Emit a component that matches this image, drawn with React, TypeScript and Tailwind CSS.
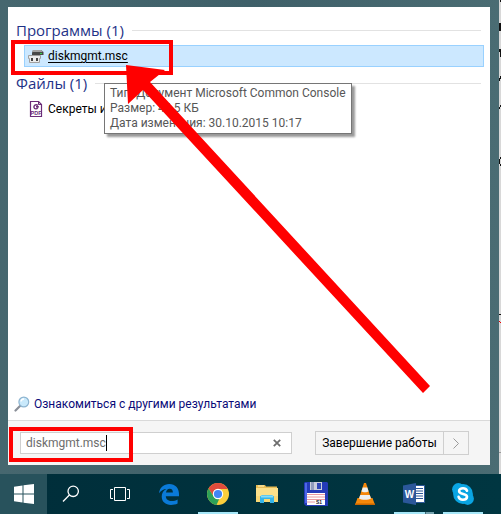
import React from 'react';

function DiskIcon() {
  return (
    <svg viewBox="0 0 16 16" className="w-4 h-4 shrink-0">
      <path d="M5 2h8l2.500 2v3H4V5z" fill="#484848" />
      <path d="M5 2h8l2 2H4z" fill="#a2a2a2" />
      <path d="M12 5h2v1h-2z" fill="#35d04a" />
      <path d="M.5 7.500h12v3h-1v4h-10v-4h-1z" fill="#ececec" stroke="#a0a0a0" />
      <path d="M3 10h2v3H3zM8 10h2v3H8z" fill="#444" />
    </svg>
  );
}

function PdfIcon() {
  return (
    <svg viewBox="0 0 16 16" className="w-4 h-4 shrink-0">
      <path d="M2.5.5h8l3 3v12h-11z" fill="#fff" stroke="#6b2c78" strokeWidth="1.200" />
      <path d="M10.5.5v3h3" fill="none" stroke="#6b2c78" />
      <path d="M10 4.300c-2.500-1.500-4.500.3-4 2.300.5 1.800 3 1.600 3.700.1l.3-1H8" fill="none" stroke="#6b2c78" strokeWidth="1.400" />
      <text x="8" y="14.300" textAnchor="middle" fontSize="5.500" fontWeight="700" fontFamily="Liberation Sans, sans-serif" fill="#6b2c78">PDF</text>
    </svg>
  );
}

function LensIcon() {
  return (
    <svg viewBox="0 0 16 16" className="w-4 h-4 shrink-0">
      <path d="M1.5 14.5 6 10" stroke="#8a8f98" strokeWidth="2.2" strokeLinecap="round" />
      <circle cx="9.8" cy="6" r="4.9" fill="#c9e9fb" stroke="#8db4d0" strokeWidth="1.2" />
      <path d="M7 5.5A3 3 0 0 1 10 3" stroke="#fff" strokeWidth="1.4" fill="none" />
    </svg>
  );
}

const startIcon = (
  <svg viewBox="0 0 20 20" className="w-5 h-5" fill="#fff">
    <path d="M0 2.8 8.5 1.5v8H0zM9.5 1.3 20 0v9.5H9.5zM0 10.5h8.5v8L0 17.3zM9.5 10.5H20V20L9.5 18.7z" />
  </svg>
);

const searchIcon = (
  <svg viewBox="0 0 18 18" className="w-[18px] h-[18px]" fill="none" stroke="#fff" strokeWidth="1.3">
    <circle cx="11.2" cy="6.3" r="5.2" />
    <path d="M7.4 10 1 16.5" />
  </svg>
);

const taskViewIcon = (
  <svg viewBox="0 0 20 16" className="w-5 h-4" fill="none" stroke="#fff">
    <path d="M4.5 1.5h11v13h-11zM3 3.5H.5v9H3M17 3.5h2.5v9H17" />
  </svg>
);

const edgeIcon = (
  <svg viewBox="0 0 20 21" className="w-5 h-[21px]">
    <path
      d="M0 9.2C.8 3.5 4.8 0 10.3 0 16.400 0 20 4.300 20 10v2.300H6.800c.1 3.200 2.600 4.700 5.800 4.700 2.300 0 4.300-.6 6-1.600v4.200c-2 1-4.200 1.400-6.600 1.400-5.600 0-9.300-3.300-9.300-8.400 0-3.300 1.700-6.100 4.800-7.500C4.500 5.200 1.900 6.700 0 9.200zM7 8.500h6.900c0-2.300-1-3.700-3.200-3.700C8.600 4.800 7.400 6.200 7 8.500z"
      fill="#0a7ad8"
    />
  </svg>
);

const chromeIcon = (
  <svg viewBox="0 0 22 22" className="w-[22px] h-[22px]">
    <circle cx="11" cy="11" r="11" fill="#fbce3c" />
    <path d="M1.500 5.500A11 11 0 0 1 20.500 5.500L20.800 6H11a5 5 0 0 0-4.500 7z" fill="#df4b3c" />
    <path d="M1.500 5.500 6.700 13.500A5 5 0 0 0 12.200 15.900L9.500 21.900A11 11 0 0 1 1.500 5.500z" fill="#2da158" />
    <circle cx="11" cy="11" r="5.200" fill="#fff" />
    <circle cx="11" cy="11" r="4.100" fill="#4285f4" />
  </svg>
);

const folderIcon = (
  <svg viewBox="0 0 22 20" className="w-[22px] h-5">
    <path d="M0 1h9l1 1.500h11V5H0z" fill="#e8bd55" />
    <path d="M2 1.500h6v1H2z" fill="#fff4c4" />
    <path d="M0 4h22v14H0z" fill="#fbe08a" />
    <path d="M0 12h22v6H0z" fill="#f8d775" />
    <path d="M4 19v-6.500L6 11h10l2 1.500V19h-4v-4H8v4z" fill="#35b5ea" />
    <path d="M5 11.500h12v2H5z" fill="#8adcf7" />
  </svg>
);

const floppyIcon = (
  <svg viewBox="0 0 24 24" className="w-6 h-6">
    <path d="M1 0h22l1 1v23H2l-2-2V1z" fill="#243bb8" />
    <path d="M1 1h2v20H1z" fill="#4d67e5" />
    <path d="M6 0h12v8H6z" fill="#c9cfdc" />
    <path d="M7 0h3v8H7z" fill="#8f9cbc" />
    <path d="M13 1h4v6h-4z" fill="#3049b8" />
    <path d="M3 11h18v12H3z" fill="#fff" />
    <path d="M3 12.500h18M3 15h18M3 17.500h18M3 20h8" stroke="#e99aa0" />
    <text x="12" y="22" fontSize="5" fontWeight="700" fontFamily="Liberation Sans, sans-serif" fill="#222">S1</text>
  </svg>
);

const coneIcon = (
  <svg viewBox="0 0 20 22" className="w-5 h-[22px]">
    <path d="M2.500 15h15L20 22H0z" fill="#f58a0b" />
    <path d="M0 20.500h20V22H0z" fill="#c96700" />
    <path d="M9 0h2l5.500 17c-2 2-11 2-13 0z" fill="#f58609" />
    <path d="M7.700 4.500h4.600l1.300 4c-1.500 1-5.700 1-7.200 0zM5.200 12h9.600l1.200 3.500c-2 1.700-10 1.700-12 0z" fill="#eceff1" />
  </svg>
);

const wordIcon = (
  <svg viewBox="0 0 22 22" className="w-[22px] h-[22px]">
    <path d="M12 2.500h9.500v17H12z" fill="#fff" stroke="#2b579a" />
    <path d="M13 5.500h7M13 8h7M13 10.500h7M13 13h7M13 15.500h7" stroke="#2b579a" />
    <path d="M0 2.500 13 0v22L0 19.500z" fill="#2b579a" />
    <text x="6.500" y="15" textAnchor="middle" fontSize="10" fontWeight="700" fontFamily="Liberation Sans, sans-serif" fill="#fff">W</text>
  </svg>
);

const skypeIcon = (
  <svg viewBox="0 0 22 22" className="w-[22px] h-[22px]">
    <circle cx="6.300" cy="6.300" r="6.200" fill="#0aa5e3" />
    <circle cx="15.700" cy="15.700" r="6.200" fill="#0aa5e3" />
    <circle cx="11" cy="11" r="9.900" fill="#0aa5e3" />
    <path
      d="M15 7.700C14.300 5.900 12.800 5.300 11 5.300c-2.300 0-3.900 1-3.900 2.700 0 4 7.900 2 7.900 5.800 0 1.800-1.700 2.900-4.100 2.900-2.200 0-3.700-.9-4.300-2.900"
      fill="none"
      stroke="#fff"
      strokeWidth="2.600"
      strokeLinecap="round"
    />
  </svg>
);

const apps = [
  { name: 'Поиск', icon: searchIcon },
  { name: 'Представление задач', icon: taskViewIcon },
  { name: 'Edge', icon: edgeIcon },
  { name: 'Chrome', icon: chromeIcon, open: true },
  { name: 'Проводник', icon: folderIcon },
  { name: 'Total Commander', icon: floppyIcon },
  { name: 'VLC', icon: coneIcon },
  { name: 'Word', icon: wordIcon, open: true, stacked: true },
  { name: 'Skype', icon: skypeIcon, open: true },
];

function SectionTitle({ children }: { children: React.ReactNode }) {
  return (
    <div className="flex items-center gap-2 pl-2 pr-[9px]">
      <h2 className="font-['Open_Sans','Noto_Sans',sans-serif] text-[15px] leading-5 text-[#1e3287] whitespace-nowrap">{children}</h2>
      <div className="flex-1 h-px bg-[#e2e2e2]" />
    </div>
  );
}

function StartMenu() {
  return (
    <main className="relative flex-1 flex flex-col bg-white text-xs">
      <div className="flex-1 flex flex-col pt-[13px]">
        <SectionTitle>Программы (1)</SectionTitle>
        <a href="#diskmgmt" className="flex items-center gap-1 h-[22px] mt-[5px] ml-4 mr-[6px] pl-[3px] bg-[#cce8ff] border border-[#99d1ff] text-black">
          <DiskIcon />
          <span className="underline underline-offset-2">diskmgmt.msc</span>
        </a>
        <div className="mt-[6px]">
          <SectionTitle>Файлы (1)</SectionTitle>
        </div>
        <a href="#secrets" className="flex items-center gap-1 h-[22px] mt-[5px] ml-4 mr-[6px] pl-1 text-black">
          <PdfIcon />
          <span>Секреты и</span>
        </a>
        <a href="#more" className="mt-auto mb-2 ml-[6px] flex items-center gap-1 text-[#0a0a78]">
          <LensIcon />
          <span>Ознакомиться с другими результатами</span>
        </a>
      </div>

      <div className="flex items-center h-[45px] pl-3 bg-[#f5f5f5] border-t border-[#d9d9d9]">
        <div className="relative flex items-center w-[272px] h-[22px] bg-white border border-[#cfcfcf]">
          <input aria-label="Найти программы и файлы" defaultValue="diskmgmt.msc" className="flex-1 min-w-0 px-[5px] bg-transparent text-[#6d6d6d] outline-none" />
          <span className="absolute left-[85px] top-[2px] w-px h-4 bg-black" />
          <button aria-label="Очистить" className="w-7 flex justify-center">
            <svg viewBox="0 0 8 8" className="w-2 h-2" stroke="#6d6d6d" strokeWidth="1.800">
              <path d="M.8.8l6.400 6.400M7.200.8.8 7.200" />
            </svg>
          </button>
        </div>
        <div className="flex ml-[23px] h-6 border border-[#cfcfcf] text-black">
          <button className="w-32 text-center whitespace-nowrap border-r border-[#cfcfcf]">Завершение работы</button>
          <button aria-label="Другие действия" className="w-6 flex items-center justify-center">
            <svg viewBox="0 0 6 11" className="w-[6px] h-[11px]" fill="none" stroke="#9a9a9a">
              <path d="M.5.5l5 5-5 5" />
            </svg>
          </button>
        </div>
      </div>

      <div role="tooltip" className="absolute left-24 top-[76px] px-[5px] py-[2px] leading-[15px] whitespace-nowrap bg-white border border-[#767676] text-[#575757] shadow-[3px_3px_2px_#00000066]">
        <p>Тип: Документ Microsoft Common Console</p>
        <p>Размер: 46,5 КБ</p>
        <p>Дата изменения: 30.10.2015 10:17</p>
      </div>

      {/* highlight frames and pointer */}
      <div className="absolute left-[3px] top-[33px] w-[162px] h-[35px] border-4 border-[#ff0000] pointer-events-none" />
      <div className="absolute left-px bottom-[3px] w-[124px] h-[35px] border-4 border-[#ff0000] pointer-events-none" />
      <svg viewBox="126 65 305 329" className="absolute left-[118px] top-[58px] w-[305px] h-[329px] pointer-events-none">
        <path d="M126 65 165 70 150 82 430 386 423 393 143 90 128 104z" fill="#ff0000" />
      </svg>
    </main>
  );
}

function Taskbar() {
  return (
    <nav className="flex h-10 bg-linear-to-r from-[#002e3a] to-[#003641]">
      <button aria-label="Пуск" className="w-[47px] flex items-center justify-center bg-[#28525c]">{startIcon}</button>
      {apps.map((app) => (
        <button key={app.name} aria-label={app.name} className="relative w-12 mr-px flex items-center justify-center">
          {app.icon}
          {app.open && (
            <span className="absolute bottom-0 left-1 w-10 h-[2px] flex bg-[#a6e7f8]">
              {app.stacked && <span className="ml-auto w-[9px] bg-[#75a3af] border-l border-[#426b76]" />}
            </span>
          )}
        </button>
      ))}
    </nav>
  );
}

export default function App() {
  return (
    <div className="min-h-screen flex flex-col bg-[#476870] font-['Roboto','Open_Sans',sans-serif]">
      <div className="flex-1 flex">
        <div className="flex-1 flex pt-[7px] pb-[9px] pl-2 pr-[9px] bg-linear-to-r from-[#46676f] via-[#3f6069] to-[#4a6c73]">
          <StartMenu />
        </div>
        {/* edge of the document behind the menu */}
        <div className="w-[2px] bg-[#d8d8d8]">
          <svg viewBox="0 0 2 474" className="w-[2px] h-[474px]" shapeRendering="crispEdges">
            <path d="M1 0h1v2H1zM0 23h2v8H0zM0 49h2v3H0zM1 52h1v5H1zM0 78h1v3H0zM1 76h1v3H1zM0 107h1v2H0zM1 105h1v2H1zM0 159h1v5H0zM1 157h1v2H1zM1 164h1v2H1zM0 314h2v1H0z" fill="#111" />
            <path d="M0 321h1v1H0zM1 322h1v1H1z" fill="#e00" />
            <path d="M0 452h2v1H0z" fill="#999" />
          </svg>
        </div>
      </div>
      <Taskbar />
    </div>
  );
}
